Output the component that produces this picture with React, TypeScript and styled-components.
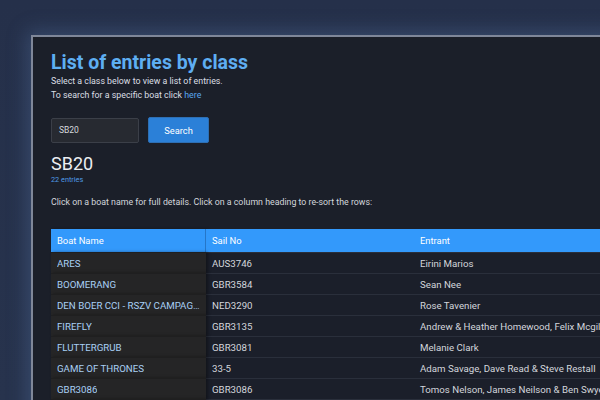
import React from "react";
import styled, { createGlobalStyle } from "styled-components";

const GlobalStyle = createGlobalStyle`
    html, body {
        margin: 0;
        padding: 0;
        background: #26314a;
        overflow: hidden;
    }
`;

type Entry = {
    boat: string;
    sail: string;
    entrant: string;
};

const entries: Entry[] = [
    { boat: "ARES", sail: "AUS3746", entrant: "Eirini Marios" },
    { boat: "BOOMERANG", sail: "GBR3584", entrant: "Sean Nee" },
    { boat: "DEN BOER CCI - RSZV CAMPAGNE", sail: "NED3290", entrant: "Rose Tavenier" },
    { boat: "FIREFLY", sail: "GBR3135", entrant: "Andrew & Heather Homewood, Felix Mcgill" },
    { boat: "FLUTTERGRUB", sail: "GBR3081", entrant: "Melanie Clark" },
    { boat: "GAME OF THRONES", sail: "33-5", entrant: "Adam Savage, Dave Read & Steve Restall" },
    { boat: "GBR3086", sail: "GBR3086", entrant: "Tomos Nelson, James Neilson & Ben Swyer" },
    { boat: "HOT STUFF", sail: "GBR3120", entrant: "John Smith" },
];

const Page = styled.div`
    width: 600px;
    height: 400px;
    box-sizing: border-box;
    padding: 35px 0 0 31px;
    overflow: hidden;
    font-family: Roboto, "Liberation Sans", sans-serif;
    background: linear-gradient(180deg, #25304a 0%, #27334d 100%);
`;

const Panel = styled.div`
    width: 720px;
    min-height: 420px;
    box-sizing: border-box;
    background: #1b1f29;
    border-top: 2px solid #7f8799;
    border-left: 2px solid #7f8799;
    box-shadow: 0 0 18px 4px rgba(90, 120, 170, 0.35);
    padding: 15px 0 0 18px;
`;

const Title = styled.h1`
    margin: 0;
    font-size: 19.5px;
    line-height: 22px;
    font-weight: 700;
    color: #5eaef2;
`;

const Intro = styled.p`
    margin: 0;
    font-size: 8.8px;
    line-height: 14px;
    color: #dcdfe5;
`;

const Link = styled.a`
    color: #5aa6ee;
    text-decoration: none;
`;

const SearchRow = styled.div`
    display: flex;
    align-items: center;
    gap: 9px;
    margin-top: 15px;
`;

const Input = styled.div`
    width: 88px;
    height: 25px;
    box-sizing: border-box;
    padding: 0 7px;
    display: flex;
    align-items: center;
    background: #272a31;
    border: 1px solid #3b3f48;
    border-radius: 2px;
    color: #d6d9de;
    font-size: 8.5px;
`;

const Button = styled.button`
    width: 61px;
    height: 26px;
    border: 1px solid #2e6fb3;
    border-radius: 2px;
    background: #2b80d8;
    color: #ffffff;
    font-family: inherit;
    font-size: 9.3px;
    padding: 0;
`;

const ClassName = styled.h2`
    margin: 10px 0 0;
    font-size: 18px;
    line-height: 22px;
    font-weight: 400;
    color: #eceef2;
`;

const Count = styled.div`
    font-size: 7.3px;
    line-height: 10px;
    color: #4f9be6;
`;

const Hint = styled.p`
    margin: 10px 0 0;
    font-size: 8.8px;
    line-height: 14px;
    color: #d3d6dc;
`;

const Table = styled.div`
    margin-top: 20px;
    display: grid;
    grid-template-columns: 155px 208px 340px;
`;

const HeadCell = styled.div<{ $first?: boolean }>`
    height: 23px;
    display: flex;
    align-items: center;
    padding-left: 6px;
    background: #3399fb;
    color: #ffffff;
    font-size: 9.4px;
    border-right: ${(p) => (p.$first ? "1px solid #2576c8" : "none")};
    box-shadow: ${(p) => (p.$first ? "2px 0 3px rgba(0,0,0,0.25)" : "none")};
    position: ${(p) => (p.$first ? "relative" : "static")};
    z-index: 1;
`;

const Cell = styled.div<{ $first?: boolean }>`
    height: 21px;
    box-sizing: border-box;
    display: flex;
    align-items: center;
    padding: 0 6px;
    border-top: 1px solid ${(p) => (p.$first ? "#1f1f20" : "#2a2f3b")};
    background: ${(p) => (p.$first ? "#252526" : "#1b1f2a")};
    color: ${(p) => (p.$first ? "#a9d0f5" : "#d3d6dc")};
    font-size: 9.7px;
    white-space: nowrap;
    overflow: hidden;
    box-shadow: ${(p) => (p.$first ? "2px 0 3px rgba(0,0,0,0.35)" : "none")};
    position: ${(p) => (p.$first ? "relative" : "static")};
    z-index: ${(p) => (p.$first ? 1 : 0)};
`;

const CellText = styled.span`
    overflow: hidden;
    text-overflow: ellipsis;
`;

const App: React.FC = () => {
    return (
        <Page>
            <GlobalStyle />
            <Panel>
                <Title>List of entries by class</Title>
                <Intro>Select a class below to view a list of entries.</Intro>
                <Intro>
                    To search for a specific boat click <Link href="#">here</Link>
                </Intro>
                <SearchRow>
                    <Input>SB20</Input>
                    <Button>Search</Button>
                </SearchRow>
                <ClassName>SB20</ClassName>
                <Count>22 entries</Count>
                <Hint>Click on a boat name for full details. Click on a column heading to re-sort the rows:</Hint>
                <Table>
                    <HeadCell $first>Boat Name</HeadCell>
                    <HeadCell>Sail No</HeadCell>
                    <HeadCell>Entrant</HeadCell>
                    {entries.map((e) => (
                        <React.Fragment key={e.boat}>
                            <Cell $first><CellText>{e.boat}</CellText></Cell>
                            <Cell>{e.sail}</Cell>
                            <Cell>{e.entrant}</Cell>
                        </React.Fragment>
                    ))}
                </Table>
            </Panel>
        </Page>
    );
};

export default App;
